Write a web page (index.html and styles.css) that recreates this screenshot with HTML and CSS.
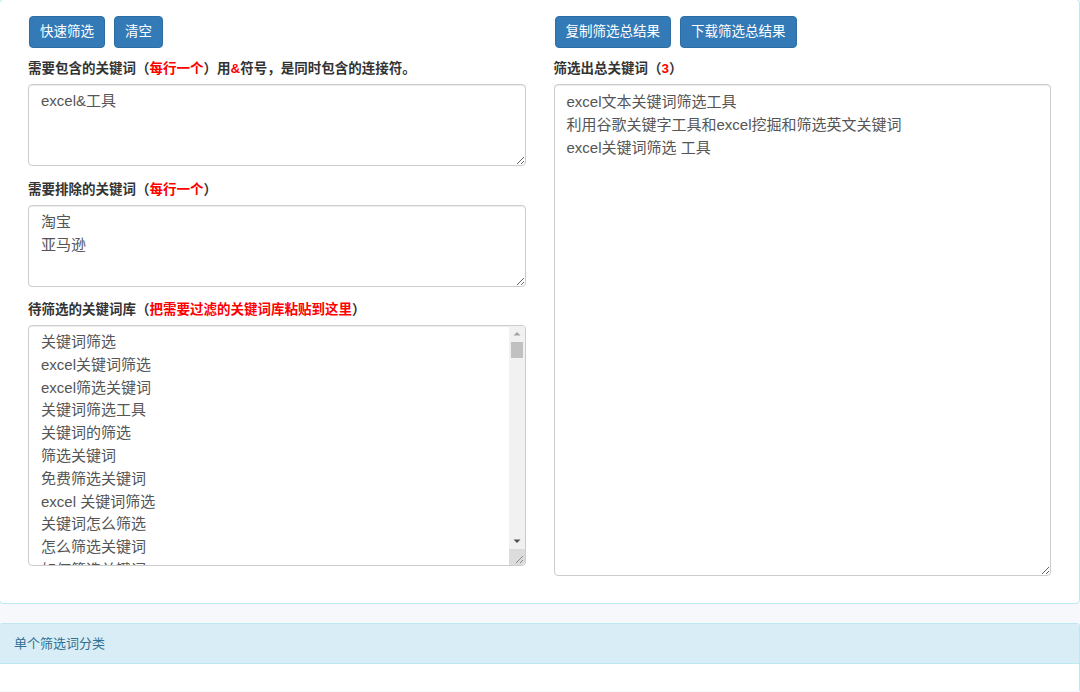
FILE: index.html
```html
<!DOCTYPE html>
<html lang="zh-CN">
<head>
<meta charset="utf-8">
<title>关键词筛选</title>
<link rel="stylesheet" href="styles.css">
</head>
<body>
<div class="panel panel-main">
  <div class="panel-body grid">
    <div class="col">
      <div class="btns">
        <button class="btn">快速筛选</button>
        <button class="btn">清空</button>
      </div>
      <div class="label first">需要包含的关键词（<span class="red">每行一个</span>）用<span class="red">&amp;</span>符号，是同时包含的连接符。</div>
      <textarea class="box box-sm">excel&amp;工具</textarea>
      <div class="label">需要排除的关键词（<span class="red">每行一个</span>）</div>
      <textarea class="box box-sm">淘宝
亚马逊</textarea>
      <div class="label third">待筛选的关键词库（<span class="red">把需要过滤的关键词库粘贴到这里</span>）</div>
      <div class="libwrap">
      <textarea class="box box-lib">关键词筛选
excel关键词筛选
excel筛选关键词
关键词筛选工具
关键词的筛选
筛选关键词
免费筛选关键词
excel 关键词筛选
关键词怎么筛选
怎么筛选关键词
如何筛选关键词
excel文本关键词筛选工具
利用谷歌关键字工具和excel挖掘和筛选英文关键词
excel关键词筛选 工具
淘宝关键词筛选
亚马逊关键词筛选
关键词筛选方法
关键词筛选技巧
在线关键词筛选
关键词批量筛选
关键词筛选软件
关键词筛选标准
关键词筛选原则
seo关键词筛选
百度关键词筛选
关键词筛选规则
长尾关键词筛选
关键词筛选方式
关键词如何筛选
筛选关键词的方法
筛选关键词技巧
关键词数据筛选
关键词筛选流程
关键词筛选表格
关键词快速筛选
表格关键词筛选
wps关键词筛选
word关键词筛选
关键词筛选公式
关键词包含筛选
多个关键词筛选
批量筛选关键词
关键词筛选函数
关键词自动筛选
关键词高级筛选
关键词模糊筛选
关键词筛选功能
关键词过滤工具
关键词过滤
关键词去重
关键词分类
关键词分组工具
关键词挖掘
关键词挖掘工具
关键词拓展
关键词拓展工具
关键词排名
关键词排名查询
关键词搜索量
关键词分析
关键词分析工具
关键词优化
关键词优化工具
关键词工具
免费关键词工具
英文关键词工具
谷歌关键词工具
关键词规划师
关键词热度
关键词指数
关键词查询
长尾关键词挖掘
长尾关键词工具
seo关键词工具
关键词密度
关键词密度查询
关键词竞争度
关键词布局
关键词选择
关键词选取
如何选择关键词
怎么选关键词
关键词怎么选
选关键词技巧
关键词词库
关键词库
关键词收集
关键词整理
关键词整理工具
关键词合并
关键词组合工具
关键词组合
关键词生成器
关键词提取
关键词提取工具
文本关键词提取
excel提取关键词
excel关键词提取
excel查找关键词
excel关键词查找
excel包含关键词
excel关键词匹配
excel 筛选包含关键词
excel筛选多个关键词
excel批量筛选关键词
excel关键词统计
excel关键词分类
excel 关键词高亮
关键词统计
关键词统计工具
关键词词频统计
词频统计工具
关键词拆分
关键词拆分工具
关键词匹配
关键词匹配方式
关键词替换
关键词排序
关键词标记
关键词高亮
关键词云
关键词云生成</textarea>
      <div class="sb" aria-hidden="true">
        <div class="sb-btn">
          <svg width="8" height="8" viewBox="0 0 8 8"><path d="M0.5 5.5 L4 2 L7.5 5.5 Z" fill="#a3a3a3"/></svg>
        </div>
        <div class="sb-track"><div class="sb-thumb"></div></div>
        <div class="sb-btn">
          <svg width="8" height="8" viewBox="0 0 8 8"><path d="M0.5 2.5 L4 6 L7.5 2.5 Z" fill="#505050"/></svg>
        </div>
        <div class="sb-corner">
          <svg width="16" height="16" viewBox="0 0 16 16"><path d="M14 7 L7 14 M14 11 L11 14" stroke="#8a8a8a" stroke-width="1" fill="none"/></svg>
        </div>
      </div>
      </div>
    </div>
    <div class="col">
      <div class="btns">
        <button class="btn">复制筛选总结果</button>
        <button class="btn">下载筛选总结果</button>
      </div>
      <div class="label first">筛选出总关键词（<span class="red">3</span>）</div>
      <textarea class="box box-result">excel文本关键词筛选工具
利用谷歌关键字工具和excel挖掘和筛选英文关键词
excel关键词筛选 工具</textarea>
    </div>
  </div>
</div>
<div class="panel panel-second">
  <div class="panel-heading">单个筛选词分类</div>
  <div class="panel-body-empty"></div>
</div>
</body>
</html>
```

FILE: styles.css
```css
html, body {
  margin: 0;
  padding: 0;
}
body {
  background: #f6f8fb;
  font-family: "Liberation Sans", "Noto Sans CJK SC", sans-serif;
  color: #333;
  overflow: hidden;
  height: 692px;
}
.panel {
  background: #fff;
  border: 1px solid #bce8f1;
  border-radius: 4px;
  margin-left: -1px;
}
.panel-main {
  margin-top: -1px;
}
.panel-body {
  padding: 16px 28px 27px 28px;
}
.grid {
  display: grid;
  grid-template-columns: 1fr 1fr;
  column-gap: 28px;
  align-items: start;
}
.col {
  display: flex;
  flex-direction: column;
}
.btns {
  display: flex;
  gap: 9px;
  padding-left: 1px;
}
.btn {
  font-family: "Liberation Sans", "Noto Sans CJK SC", sans-serif;
  font-size: 13.5px;
  line-height: 20px;
  height: 32px;
  padding: 0 10px;
  color: #fff;
  background: #337ab7;
  border: 1px solid #2e6da4;
  border-radius: 4px;
}
.label {
  font-size: 13.5px;
  font-weight: bold;
  line-height: 18px;
  color: #333;
  margin-top: 15px;
  margin-bottom: 6px;
  white-space: nowrap;
}
.label.first {
  margin-top: 12px;
}
.label.third {
  margin-top: 14px;
}
.red {
  color: #f00;
}
.box {
  display: block;
  box-sizing: border-box;
  width: 100%;
  margin: 0;
  border: 1px solid #ccc;
  border-radius: 4px;
  box-shadow: inset 0 1px 1px rgba(0, 0, 0, .075);
  color: #555;
  background: #fff;
  font-family: "Liberation Sans", "Noto Sans CJK SC", sans-serif;
  font-size: 15px;
  line-height: 22.8px;
  padding: 5px 12px 4px;
  resize: vertical;
  outline: none;
}
.box-sm {
  height: 82px;
}
.libwrap {
  position: relative;
}
.box-lib {
  height: 241px;
  overflow: hidden;
  padding-top: 5px;
  padding-right: 30px;
}
.box-result {
  height: 492px;
  line-height: 23px;
  padding-top: 5px;
}
.sb {
  position: absolute;
  top: 1px;
  right: 1px;
  bottom: 1px;
  width: 16px;
  display: flex;
  flex-direction: column;
  background: #f1f1f1;
  border-radius: 0 3px 3px 0;
  overflow: hidden;
}
.sb-btn {
  height: 16px;
  flex: none;
  display: flex;
  align-items: center;
  justify-content: center;
}
.sb-track {
  flex: 1;
  padding: 0 2px;
}
.sb-thumb {
  height: 16px;
  background: #c1c1c1;
}
.sb-corner {
  height: 16px;
  flex: none;
  background: #dcdcdc;
}
.sb-corner svg {
  display: block;
}
.panel-second {
  margin-top: 19px;
  border-bottom-width: 0;
  border-radius: 4px 4px 0 0;
}
.panel-heading {
  background: #d9edf7;
  color: #31708f;
  font-size: 13px;
  line-height: 18px;
  padding: 11px 14px 10px;
  border-bottom: 1px solid #bce8f1;
  border-radius: 3px 3px 0 0;
}
.panel-body-empty {
  height: 27px;
}
```
